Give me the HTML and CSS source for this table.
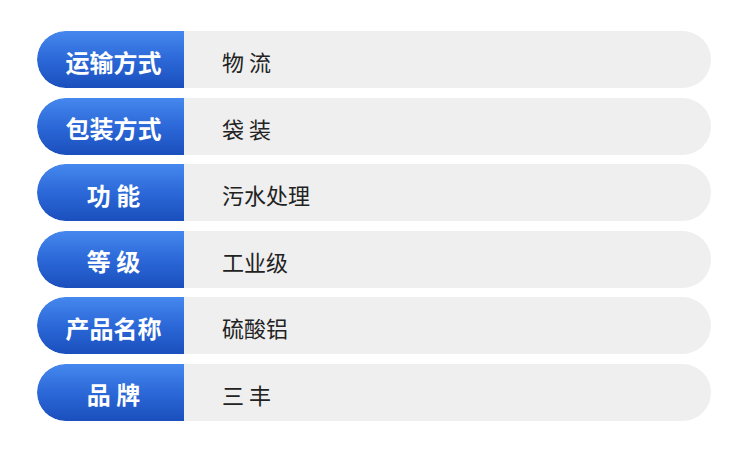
FILE: index.html
```html
<!DOCTYPE html>
<html lang="zh">
<head>
<meta charset="utf-8">
<link rel="stylesheet" href="styles.css">
</head>
<body>
<div class="table">
  <div class="row"><div class="label">运输方式</div><div class="value">物 流</div></div>
  <div class="row"><div class="label">包装方式</div><div class="value">袋 装</div></div>
  <div class="row"><div class="label">功 能</div><div class="value">污水处理</div></div>
  <div class="row"><div class="label">等 级</div><div class="value">工业级</div></div>
  <div class="row"><div class="label">产品名称</div><div class="value">硫酸铝</div></div>
  <div class="row"><div class="label">品 牌</div><div class="value">三 丰</div></div>
</div>
</body>
</html>
```
FILE: styles.css
```css
html, body {
  margin: 0;
  padding: 0;
  background: #ffffff;
}
body {
  width: 750px;
  height: 452px;
  font-family: "Noto Sans CJK SC", "Noto Sans", sans-serif;
}
.table {
  display: flex;
  flex-direction: column;
  gap: 9.6px;
  padding: 31px 39px 0 37px;
}
.row {
  display: flex;
  height: 57px;
  border-radius: 28.5px;
  background: #efefef;
  overflow: hidden;
}
.label {
  width: 147px;
  box-sizing: border-box;
  padding: 3px 0 0 6px;
  display: flex;
  align-items: center;
  justify-content: center;
  color: #ffffff;
  font-size: 24px;
  font-weight: 700;
  background: linear-gradient(180deg, #4588ee 0%, #2c68d8 50%, #1a4fbd 100%);
  border-radius: 28.5px 0 0 28.5px;
  white-space: pre;
}
.value {
  display: flex;
  align-items: center;
  padding: 3px 0 0 38px;
  font-size: 22px;
  color: #222222;
  white-space: pre;
}
```
